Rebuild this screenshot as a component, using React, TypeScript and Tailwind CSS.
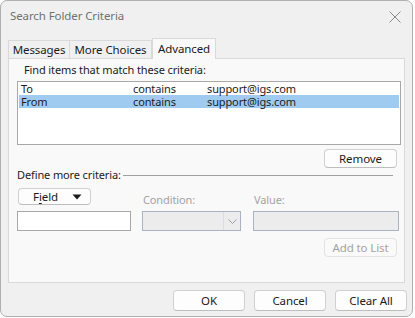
import React from "react";

const font = { fontFamily: '"Noto Sans", "Open Sans", sans-serif' };

function Btn({ children, disabled, className = "" }: { children: React.ReactNode; disabled?: boolean; className?: string }) {
  return (
    <div
      className={
        "flex items-center justify-center rounded-[4px] border text-[11.5px] tracking-[-0.1px] leading-none " +
        (disabled
          ? "border-[#e2e2e2] bg-[#fafafa] text-[#a3a3a3] "
          : "border-[#d0d0d0] border-b-[#bdbdbd] bg-[#fdfdfd] text-[#1b1b1b] ") +
        className
      }
    >
      {children}
    </div>
  );
}

export default function App() {
  return (
    <div className="w-[415px] h-[318px] bg-white" style={font}>
      <div className="w-[413px] h-[317px] bg-[#f0f0f0] border border-[#b0b0b0] rounded-[7px] flex flex-col text-[#1b1b1b]">
        {/* Title bar */}
        <div className="h-[35px] flex items-start justify-between pl-[9px] pr-[10px] pt-[7px]">
          <span className="text-[11.5px] tracking-[-0.1px] leading-[16px] text-[#707070]">Search Folder Criteria</span>
          <svg width="14" height="14" viewBox="0 0 14 14" className="mt-[2px]">
            <path d="M1.5 1.5 L12.5 12.5 M12.5 1.5 L1.5 12.5" stroke="#8a8a8a" strokeWidth="1" />
          </svg>
        </div>
        {/* Tabs */}
        <div className="h-[22px] flex items-end pl-[7px] text-[11.5px] tracking-[-0.1px]">
          <div className="w-[62px] h-[18px] border border-b-0 border-[#d9d9d9] flex items-center justify-center leading-none">
            Messages
          </div>
          <div className="w-[82px] h-[18px] border border-b-0 border-l-0 border-[#d9d9d9] flex items-center justify-center leading-none">
            More Choices
          </div>
          <div className="relative z-10 -mb-px w-[64px] h-[21px] border border-b-0 border-[#d9d9d9] bg-[#f9f9f9] flex items-start justify-center pt-[3px] leading-[14px]">
            Advanced
          </div>
        </div>
        {/* Panel */}
        <div className="ml-[7px] w-[397px] h-[225px] border border-[#d9d9d9] bg-[#f9f9f9] flex flex-col text-[11px] tracking-[-0.12px]">
          <div className="pl-[15px] mt-[4px] leading-[14px]">Find items that match these criteria:</div>
          <div className="ml-[8px] mt-[4px] w-[384px] h-[64px] border border-[#a8a8a8] bg-white px-[1px] leading-[13px]">
            <div className="flex h-[13px] pl-[2px]">
              <span className="w-[112px]">To</span>
              <span className="w-[74px]">contains</span>
              <span>support@igs.com</span>
            </div>
            <div className="flex h-[13px] pl-[2px] bg-[#9fcbf1]">
              <span className="w-[112px]">From</span>
              <span className="w-[74px]">contains</span>
              <span>support@igs.com</span>
            </div>
          </div>
          <div className="flex justify-end mr-[7px] mt-[4px]">
            <Btn className="w-[73px] h-[19px]">Remove</Btn>
          </div>
          <div className="flex items-center pl-[8px] mr-[11px] h-[14px]">
            <span className="leading-[14px]">Define more criteria:</span>
            <div className="flex-1 h-px bg-[#a0a0a0] ml-[2px]" />
          </div>
          <div className="flex items-end mt-[6px] ml-[8px]">
            <div className="w-[114px] flex flex-col">
              <Btn className="ml-[1px] w-[73px] h-[17px] gap-[14px] pl-[6px]">
                <span>
                  F<span className="underline underline-offset-2">i</span>eld
                </span>
                <svg width="10" height="6" viewBox="0 0 10 6">
                  <path d="M0.5 0.5 L9.5 0.5 L5 5.5 Z" fill="#1b1b1b" />
                </svg>
              </Btn>
              <div className="mt-[6px] h-[20px] border border-[#a8a8a8] bg-white" />
            </div>
            <div className="ml-[11px] w-[99px] flex flex-col">
              <span className="pl-[1px] leading-[14px] text-[#a3a3a3]">Condition:</span>
              <div className="mt-[4px] h-[20px] border border-[#a9b3c4] bg-[#ececec] flex justify-end">
                <div className="w-[17px] h-full border-l border-[#dadde3] flex items-center justify-center">
                  <svg width="9" height="5" viewBox="0 0 9 5">
                    <path d="M0.5 0.5 L4.5 4.5 L8.5 0.5" stroke="#9aa0aa" strokeWidth="1" fill="none" />
                  </svg>
                </div>
              </div>
            </div>
            <div className="ml-[12px] w-[146px] flex flex-col">
              <span className="pl-[1px] leading-[14px] text-[#a3a3a3]">Value:</span>
              <div className="mt-[4px] h-[20px] border border-[#a9b3c4] bg-[#ececec]" />
            </div>
          </div>
          <div className="flex justify-end mr-[7px] mt-[7px]">
            <Btn disabled className="w-[73px] h-[19px]">Add to List</Btn>
          </div>
        </div>
        {/* Bottom buttons */}
        <div className="flex justify-end gap-[9px] pr-[5px] mt-[7px]">
          <Btn className="w-[72px] h-[21px]">OK</Btn>
          <Btn className="w-[72px] h-[21px]">Cancel</Btn>
          <Btn className="w-[72px] h-[21px]">Clear All</Btn>
        </div>
      </div>
    </div>
  );
}
